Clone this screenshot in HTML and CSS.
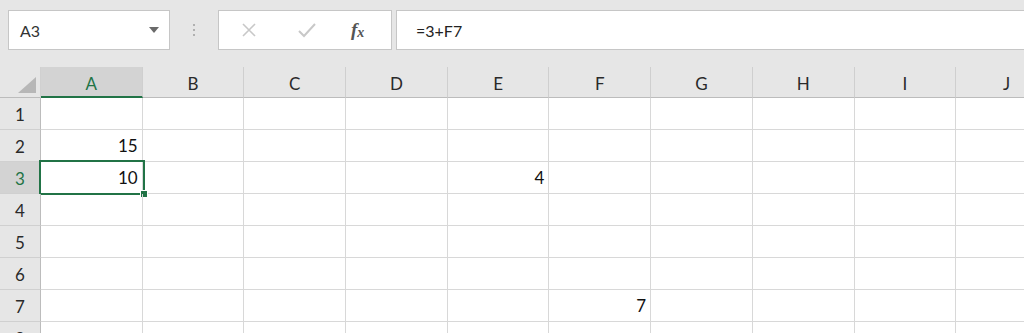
FILE: index.html
```html
<!DOCTYPE html>
<html lang="en">
<head>
  <meta charset="UTF-8" />
  <title>Sheet</title>
  <link rel="stylesheet" href="styles.css">
</head>
<body>
<div class="toolbar">
  <div class="namebox">
    <span>A3</span>
    <span class="caret"></span>
  </div>
  <div class="grip"><i></i><i></i><i></i></div>
  <div class="fxbox">
    <svg class="ico" width="20" height="20" viewBox="0 0 20 20"><path d="M4 4 L16 16 M16 4 L4 16" stroke="#c8c8c8" stroke-width="1.6" fill="none"/></svg>
    <svg class="ico" width="22" height="20" viewBox="0 0 22 20"><path d="M3 11 L8 16 L19 4" stroke="#c8c8c8" stroke-width="2" fill="none"/></svg>
    <span class="fx">f<sub>x</sub></span>
  </div>
  <div class="formula">=3+F7</div>
</div>

<div class="sheet">
  <div class="corner"><span class="tri"></span></div>
  <div class="colhead active">A</div>
  <div class="colhead">B</div>
  <div class="colhead">C</div>
  <div class="colhead">D</div>
  <div class="colhead">E</div>
  <div class="colhead">F</div>
  <div class="colhead">G</div>
  <div class="colhead">H</div>
  <div class="colhead">I</div>
  <div class="colhead">J</div>
</div>
<div id="rows"></div>

<script>
  const werte = { "2-0": "15", "3-0": "10", "3-4": "4", "7-5": "7" };
  const rowsDiv = document.getElementById("rows");
  for (let r = 1; r <= 8; r++) {
    const row = document.createElement("div");
    row.className = "sheet";
    let html = `<div class="rowhead${r === 3 ? " active" : ""}">${r}</div>`;
    for (let c = 0; c < 10; c++) {
      const v = werte[`${r}-${c}`] || "";
      html += `<div class="cell">${v}</div>`;
    }
    row.innerHTML = html;
    if (r === 3) {
      row.insertAdjacentHTML("beforeend", '<div class="sel"><span class="handle"></span></div>');
    }
    rowsDiv.appendChild(row);
  }
</script>
</body>
</html>
```

FILE: styles.css
```css
body {
  margin: 0;
  background: #fff;
  font-family: Lato, "Open Sans", sans-serif;
  color: #222;
  overflow: hidden;
  width: 1024px;
  height: 333px;
}
.toolbar {
  background: #e6e6e6;
  height: 67px;
  display: flex;
  align-items: flex-start;
  padding-top: 10px;
  box-sizing: border-box;
}
.namebox {
  margin-left: 8px;
  width: 162px;
  height: 40px;
  box-sizing: border-box;
  background: #fff;
  border: 1px solid #c6c6c6;
  display: flex;
  align-items: center;
  justify-content: space-between;
  padding: 0 10px 0 11px;
  font-size: 16px;
  color: #333;
}
.caret {
  width: 0;
  height: 0;
  border-left: 5px solid transparent;
  border-right: 5px solid transparent;
  border-top: 6px solid #6a6a6a;
}
.grip {
  width: 48px;
  height: 40px;
  display: flex;
  flex-direction: column;
  align-items: center;
  justify-content: center;
  gap: 3px;
}
.grip i {
  width: 2px;
  height: 2px;
  background: #b0b0b0;
}
.fxbox {
  width: 174px;
  height: 40px;
  box-sizing: border-box;
  background: #fff;
  border: 1px solid #c6c6c6;
  display: flex;
  align-items: center;
  padding-left: 20px;
  gap: 37px;
}
.fx {
  font-family: "Liberation Serif", serif;
  font-style: italic;
  font-weight: bold;
  font-size: 19px;
  color: #555;
  margin-left: -4px;
}
.fx sub {
  font-size: 14px;
  vertical-align: -1px;
}
.formula {
  margin-left: 4px;
  flex: 1;
  height: 40px;
  box-sizing: border-box;
  background: #fff;
  border: 1px solid #c6c6c6;
  border-right: none;
  display: flex;
  align-items: center;
  padding-left: 19px;
  font-size: 16px;
  color: #222;
}
.sheet {
  display: grid;
  grid-template-columns: 41px repeat(10, 101.7px);
  position: relative;
}
.corner {
  background: #e6e6e6;
  height: 31px;
  border-bottom: 1px solid #bcbcbc;
  border-right: 1px solid #d0d0d0;
  box-sizing: border-box;
  position: relative;
}
.tri {
  position: absolute;
  right: 4px;
  bottom: 4px;
  width: 0;
  height: 0;
  border-left: 18px solid transparent;
  border-bottom: 16px solid #b7b7b7;
}
.colhead {
  background: #e6e6e6;
  height: 31px;
  box-sizing: border-box;
  border-right: 1px solid #cfcfcf;
  border-bottom: 1px solid #bcbcbc;
  display: flex;
  align-items: center;
  justify-content: center;
  font-size: 17px;
  color: #2a2a2a;
  padding-top: 3px;
}
.colhead.active {
  background: #d3d3d3;
  color: #217346;
  border-bottom: 2px solid #217346;
}
.rowhead {
  background: #e6e6e6;
  height: 32px;
  box-sizing: border-box;
  border-right: 1px solid #bcbcbc;
  border-bottom: 1px solid #d0d0d0;
  display: flex;
  align-items: center;
  justify-content: center;
  font-size: 17px;
  color: #2a2a2a;
  padding-top: 2px;
}
.rowhead.active {
  background: #d3d3d3;
  color: #217346;
}
.cell {
  height: 32px;
  box-sizing: border-box;
  border-right: 1px solid #d8d8d8;
  border-bottom: 1px solid #d8d8d8;
  display: flex;
  align-items: flex-end;
  justify-content: flex-end;
  padding: 0 4px 5px 0;
  font-size: 17px;
  color: #111;
}
.sel {
  position: absolute;
  left: 39px;
  top: -2px;
  width: 106px;
  height: 35px;
  box-sizing: border-box;
  border: 2px solid #217346;
}
.handle {
  position: absolute;
  right: -5px;
  bottom: -5px;
  width: 6px;
  height: 6px;
  background: #217346;
  border: 1px solid #fff;
}
```
